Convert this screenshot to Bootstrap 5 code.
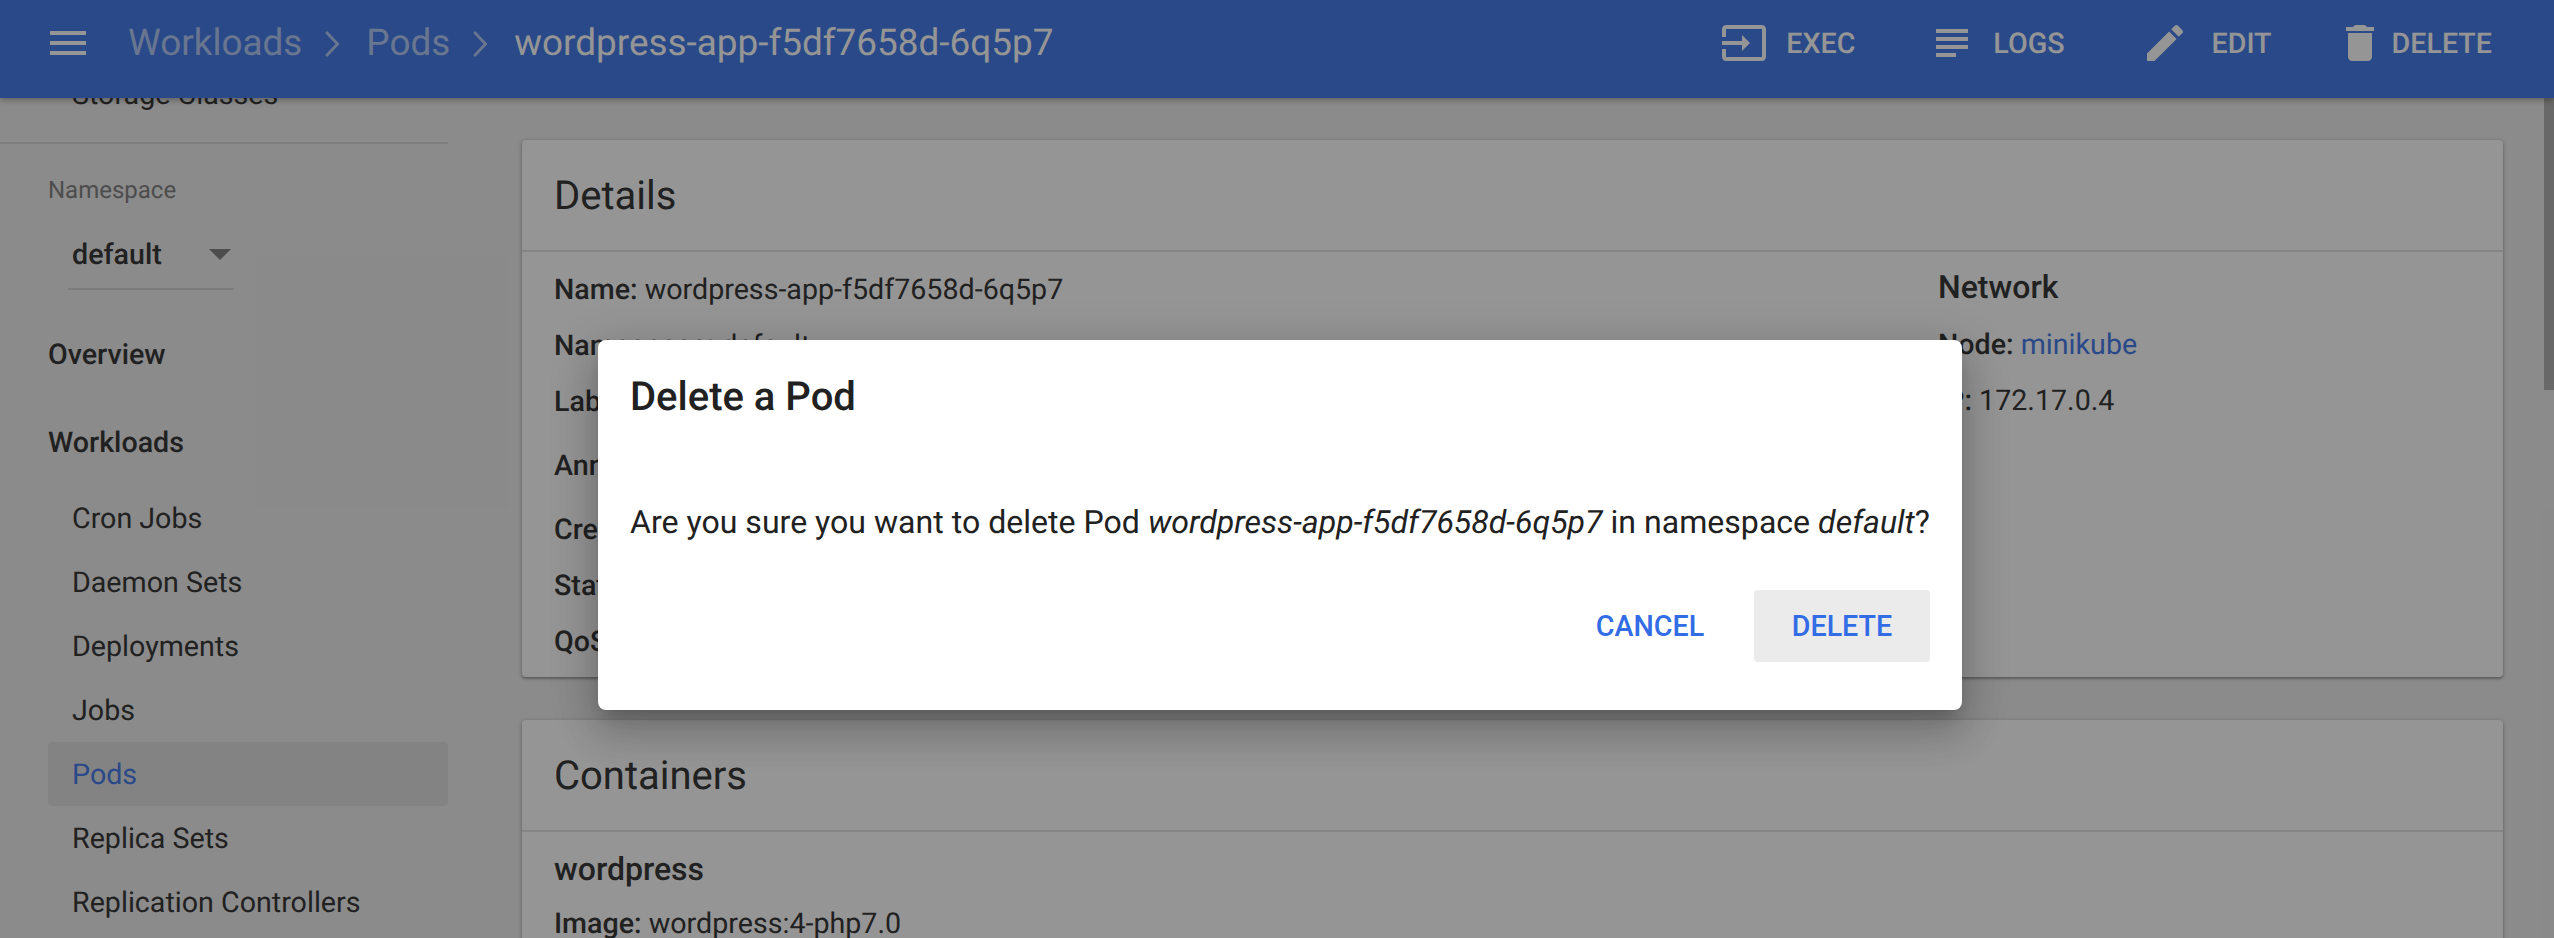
<!doctype html>
<html lang="en">
<head>
<meta charset="utf-8">
<title>Pod</title>
<link href="https://cdn.jsdelivr.net/npm/bootstrap@5.3.0/dist/css/bootstrap.min.css" rel="stylesheet">
<style>
html,body{height:938px;overflow:hidden;}
body{font-family:Roboto,"Liberation Sans",sans-serif;font-size:28.65px;color:#212121;background:#ebebeb;position:relative;text-rendering:geometricPrecision;}
.app-top{height:98px;background:#326de6;color:#fff;padding:0 0 12px 44px;position:relative;z-index:2;box-shadow:0 2px 6px rgba(0,0,0,.35);}
.app-top svg{fill:currentColor;flex:none;}
.crumbs{font-size:36.9px;margin-left:36px;padding-top:2px;}
.crumb-dim{color:rgba(255,255,255,.6);}
.crumb-sep{width:24px;height:48px;margin:0 20px;color:rgba(255,255,255,.6);}
.act{color:#fff;font-size:28.65px;font-weight:500;text-transform:uppercase;}
.acts{margin-right:62px;}
.act-exec{margin-right:73px;}
.act-exec span{margin-left:18px;}
.act-logs{margin-right:76px;}
.act-logs span{margin-left:17px;}
.act-edit{margin-right:64px;}
.act-edit span{margin-left:23px;}
.act-del span{margin-left:8px;}
.side{width:522px;flex:none;overflow:hidden;}
.side-in{margin-top:-36px;}
.sitem{height:64px;line-height:64px;margin-right:74px;margin-left:48px;padding-left:24px;border-radius:4px;}
.sitem-on{background:#dcdcdc;color:#326de6;}
.side-rule{height:2px;background:#d3d3d3;width:448px;margin:16px 0 0;}
.ns-label{font-size:24px;color:#757575;margin:29px 0 0 48px;line-height:34px;}
.ns-pick{width:166px;height:64px;margin:19px 0 0 68px;border-bottom:2px solid #cfcfcf;font-weight:500;padding-left:4px;padding-bottom:5px;}
.ns-arrow{width:0;height:0;border-left:11px solid transparent;border-right:11px solid transparent;border-top:11px solid #757575;margin-right:3px;}
.shead{font-weight:500;margin-left:48px;line-height:40px;}
.shead-a{margin-top:44px;}
.shead-b{margin-top:48px;margin-bottom:24px;}
.mainp{flex:1;padding:42px 51px 0 0;min-width:0;}
.pcard{background:#fff;border-radius:4px;box-shadow:0 1px 4px rgba(0,0,0,.3),0 2px 2px rgba(0,0,0,.2);margin-bottom:43px;}
.pcard-h{font-size:40px;height:112px;line-height:112px;padding:0 32px;border-bottom:2px solid #e0e0e0;}
.pcard-b{padding:17px 32px 0;}
.lcol{width:1384px;flex:none;}
.frow{line-height:40px;margin-bottom:16px;}
.frow-t{margin-bottom:24px;}
.frow b,.sub-t{font-weight:500;}
.sub-t{font-size:32px;line-height:40px;margin-bottom:14px;}
.sub-net{margin-top:-2px;margin-bottom:17px;}
.nlink{color:#326de6;text-decoration:none;}
.thumb{position:absolute;right:0;top:98px;width:10px;height:292px;background:#aaa;z-index:1;}
.veil{position:absolute;inset:0;background:rgba(33,33,33,.48);z-index:3;}
.dlg{position:absolute;left:598px;top:340px;width:1364px;height:370px;background:#fff;border-radius:8px;z-index:4;padding:0 32px;box-shadow:0 11px 15px -7px rgba(0,0,0,.2),0 24px 38px 3px rgba(0,0,0,.14),0 9px 46px 8px rgba(0,0,0,.12);}
.dlg-t{font-size:40px;font-weight:500;line-height:56px;margin:29px 0 0;}
.dlg-m{font-size:32.1px;line-height:44px;margin:75px 0 0;white-space:nowrap;}
.dlg-f{margin-top:46px;gap:16px;}
.dlg-btn{font-size:28.65px;font-weight:500;color:#326de6;background:none;border:0;border-radius:4px;height:72px;width:176px;padding:0;text-transform:uppercase;}
.dlg-btn-on{background:#ebebeb;}
</style>
</head>
<body>
<header class="app-top d-flex align-items-center">
  <svg width="48" height="48" viewBox="0 0 24 24"><path d="M3 18h18v-2H3v2zm0-5h18v-2H3v2zm0-7v2h18V6H3z"/></svg>
  <div class="crumbs d-flex align-items-center">
    <span class="crumb-dim">Workloads</span>
    <svg class="crumb-sep" viewBox="0 0 12 24"><path d="M2.6 5.5 8.8 12l-6.2 6.5-1-1L6.8 12 1.6 6.5z"/></svg>
    <span class="crumb-dim">Pods</span>
    <svg class="crumb-sep" viewBox="0 0 12 24"><path d="M2.6 5.5 8.8 12l-6.2 6.5-1-1L6.8 12 1.6 6.5z"/></svg>
    <span>wordpress-app-f5df7658d-6q5p7</span>
  </div>
  <div class="acts ms-auto d-flex align-items-center">
    <div class="act act-exec d-flex align-items-center"><svg width="48" height="48" viewBox="0 0 24 24"><path d="M21 3.01H3c-1.1 0-2 .9-2 2V9h2V4.99h18v14.03H3V15H1v4.01c0 1.1.9 1.98 2 1.98h18c1.1 0 2-.88 2-1.98v-14c0-1.11-.9-2-2-2zM11 16l4-4-4-4v3H1v2h10v3z"/></svg><span>Exec</span></div>
    <div class="act act-logs d-flex align-items-center"><svg width="48" height="48" viewBox="0 0 24 24"><path d="M14 17H4v2h10v-2zm6-8H4v2h16V9zM4 15h16v-2H4v2zM4 5v2h16V5H4z"/></svg><span>Logs</span></div>
    <div class="act act-edit d-flex align-items-center"><svg width="48" height="48" viewBox="0 0 24 24"><path d="M3 17.25V21h3.75L17.81 9.94l-3.75-3.75L3 17.25zM20.71 7.04c.39-.39.39-1.02 0-1.41l-2.34-2.34c-.39-.39-1.02-.39-1.41 0l-1.83 1.83 3.75 3.75 1.83-1.83z"/></svg><span>Edit</span></div>
    <div class="act act-del d-flex align-items-center"><svg width="48" height="48" viewBox="0 0 24 24"><path d="M6 19c0 1.1.9 2 2 2h8c1.1 0 2-.9 2-2V7H6v12zM19 4h-3.5l-1-1h-5l-1 1H5v2h14V4z"/></svg><span>Delete</span></div>
  </div>
</header>
<div class="d-flex">
  <nav class="side">
    <div class="side-in">
      <div class="sitem">Storage Classes</div>
      <div class="side-rule"></div>
      <div class="ns-label">Namespace</div>
      <div class="ns-pick d-flex align-items-center justify-content-between"><span>default</span><span class="ns-arrow"></span></div>
      <div class="shead shead-a">Overview</div>
      <div class="shead shead-b">Workloads</div>
      <div class="sitem">Cron Jobs</div>
      <div class="sitem">Daemon Sets</div>
      <div class="sitem">Deployments</div>
      <div class="sitem">Jobs</div>
      <div class="sitem sitem-on">Pods</div>
      <div class="sitem">Replica Sets</div>
      <div class="sitem">Replication Controllers</div>
    </div>
  </nav>
  <main class="mainp">
    <section class="pcard">
      <div class="pcard-h">Details</div>
      <div class="pcard-b d-flex">
        <div class="lcol">
          <div class="frow"><b>Name:</b> wordpress-app-f5df7658d-6q5p7</div>
          <div class="frow"><b>Namespace:</b> default</div>
          <div class="frow frow-t"><b>Labels:</b></div>
          <div class="frow frow-t"><b>Annotations:</b></div>
          <div class="frow"><b>Created:</b></div>
          <div class="frow"><b>Status:</b></div>
          <div class="frow"><b>QoS Class:</b></div>
        </div>
        <div>
          <div class="sub-t sub-net">Network</div>
          <div class="frow"><b>Node:</b> <a class="nlink" href="#">minikube</a></div>
          <div class="frow"><b>IP:</b> 172.17.0.4</div>
        </div>
      </div>
    </section>
    <section class="pcard">
      <div class="pcard-h">Containers</div>
      <div class="pcard-b">
        <div class="sub-t">wordpress</div>
        <div class="frow"><b>Image:</b> wordpress:4-php7.0</div>
      </div>
    </section>
  </main>
</div>
<div class="thumb"></div>
<div class="veil"></div>
<div class="dlg" role="dialog">
  <h2 class="dlg-t">Delete a Pod</h2>
  <p class="dlg-m">Are you sure you want to delete Pod <i>wordpress-app-f5df7658d-6q5p7</i> in namespace <i>default</i>?</p>
  <div class="dlg-f d-flex justify-content-end align-items-center">
    <button class="dlg-btn" type="button">Cancel</button>
    <button class="dlg-btn dlg-btn-on" type="button">Delete</button>
  </div>
</div>
<script src="https://cdn.jsdelivr.net/npm/bootstrap@5.3.0/dist/js/bootstrap.bundle.min.js"></script>
</body>
</html>
